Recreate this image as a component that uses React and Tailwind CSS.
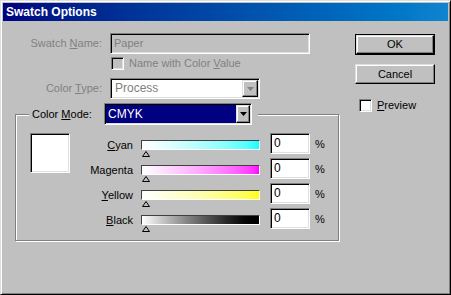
import React from 'react';

const sunken =
  'border border-t-[#808080] border-l-[#808080] border-b-white border-r-white shadow-[inset_1px_1px_0_#000,inset_-1px_-1px_0_#dfdfdf]';
const raised =
  'border border-t-[#dfdfdf] border-l-[#dfdfdf] border-b-black border-r-black shadow-[inset_-1px_-1px_0_#808080,inset_1px_1px_0_#fff]';

function Arrow({ disabled }) {
  return (
    <svg width="7" height="4" viewBox="0 0 7 4">
      <polygon points="0,0 7,0 3.5,4" fill={disabled ? '#808080' : '#000'} />
    </svg>
  );
}

function Thumb() {
  return (
    <svg width="8" height="6" viewBox="0 0 8 6" className="absolute left-[0px] top-[10px]">
      <polygon points="4,0.5 7.5,5.5 0.5,5.5" fill="#c0c0c0" stroke="#000" strokeWidth="1" />
    </svg>
  );
}

const rows = [
  { label: <><u>C</u>yan</>, grad: 'bg-linear-to-r from-white to-[#00ffff]' },
  { label: <>Magenta</>, grad: 'bg-linear-to-r from-white to-[#ff00ff]' },
  { label: <><u>Y</u>ellow</>, grad: 'bg-linear-to-r from-white to-[#ffff00]' },
  { label: <><u>B</u>lack</>, grad: 'bg-linear-to-r from-white to-black' },
];

export default function App() {
  return (
    <div className="w-[451px] h-[295px] bg-[#c0c0c0] border border-t-[#dfdfdf] border-l-[#dfdfdf] border-r-black border-b-black shadow-[inset_1px_1px_0_#fff,inset_-1px_-1px_0_#808080] p-[2px] flex flex-col font-['Liberation_Sans',Arial,sans-serif] text-[11px] leading-[13px] text-black">
      <div className="h-[18px] shrink-0 bg-linear-to-r from-[#000080] to-[#1084d0] flex items-center pl-[3px] text-white font-bold text-[12px]">
        Swatch Options
      </div>

      <div className="flex flex-1">
        {/* left column */}
        <div className="w-[352px] flex flex-col">
          <div className="mt-[12px] flex items-center h-[21px]">
            <div className="w-[99px] text-right text-[#808080]">
              Swatch <u>N</u>ame:
            </div>
            <div className={`ml-[8px] w-[200px] h-[21px] bg-[#c0c0c0] text-[#808080] pl-[3px] flex items-center ${sunken}`}>
              Paper
            </div>
          </div>

          <div className="mt-[3px] ml-[108px] flex items-center h-[13px]">
            <div className={`w-[13px] h-[13px] bg-[#c0c0c0] ${sunken}`} />
            <span className="ml-[5px] text-[#808080]">
              Name with Color <u>V</u>alue
            </span>
          </div>

          <div className="mt-[8px] flex items-center h-[21px]">
            <div className="w-[99px] text-right text-[#808080]">
              Color <u>T</u>ype:
            </div>
            <div className={`ml-[8px] w-[150px] h-[21px] bg-white p-[1px] flex ${sunken}`}>
              <div className="flex-1 pl-[3px] flex items-center text-[#808080] text-[12px]">Process</div>
              <div className={`w-[16px] h-full bg-[#c0c0c0] flex items-center justify-center ${raised}`}>
                <Arrow disabled />
              </div>
            </div>
          </div>

          <fieldset className="mt-[4px] ml-[12px] w-[324px] h-[138px] border border-[#808080] shadow-[inset_1px_1px_0_#fff,1px_1px_0_#fff] p-0 m-0">
            <legend className="ml-[13px] px-[3px] pr-[6px] flex items-center h-[22px] bg-[#c0c0c0]">
              <span className="w-[72px]">
                Color <u>M</u>ode:
              </span>
              <div className={`w-[148px] h-[22px] bg-white p-[1px] flex ${sunken}`}>
                <div className="flex-1 bg-[#000080] text-white text-[12px] pl-[2px] flex items-center">CMYK</div>
                <div className={`w-[14px] h-full bg-[#c0c0c0] flex items-center justify-center ${raised}`}>
                  <Arrow />
                </div>
              </div>
            </legend>

            <div className="mt-[8px] flex items-start">
              <div className={`ml-[14px] w-[40px] h-[40px] bg-white ${sunken}`} />
              <div className="flex flex-col gap-[4px]">
                {rows.map((r, i) => (
                  <div key={i} className="flex items-start h-[21px]">
                    <div className="w-[63px] text-right mt-[6px]">{r.label}</div>
                    <div className={`relative ml-[8px] mt-[7px] w-[119px] h-[10px] ${r.grad} border border-t-[#404040] border-l-[#404040] border-b-white border-r-white`}>
                      <Thumb />
                    </div>
                    <div className={`ml-[10px] w-[40px] h-[21px] bg-white pl-[3px] text-[12px] leading-[19px] ${sunken}`}>0</div>
                    <div className="ml-[5px] mt-[5px]">%</div>
                  </div>
                ))}
              </div>
            </div>
          </fieldset>
        </div>

        {/* right column */}
        <div className="flex flex-col pt-[13px]">
          <div className="w-[80px] h-[21px] border border-black flex">
            <div className={`flex-1 bg-[#c0c0c0] flex items-center justify-center ${raised}`}>OK</div>
          </div>
          <div className={`mt-[9px] w-[80px] h-[20px] bg-[#c0c0c0] flex items-center justify-center ${raised}`}>
            Cancel
          </div>
          <div className="mt-[15px] ml-[4px] flex items-center h-[13px]">
            <div className={`w-[13px] h-[13px] bg-white ${sunken}`} />
            <span className="ml-[5px]">
              <u>P</u>review
            </span>
          </div>
        </div>
      </div>
    </div>
  );
}
